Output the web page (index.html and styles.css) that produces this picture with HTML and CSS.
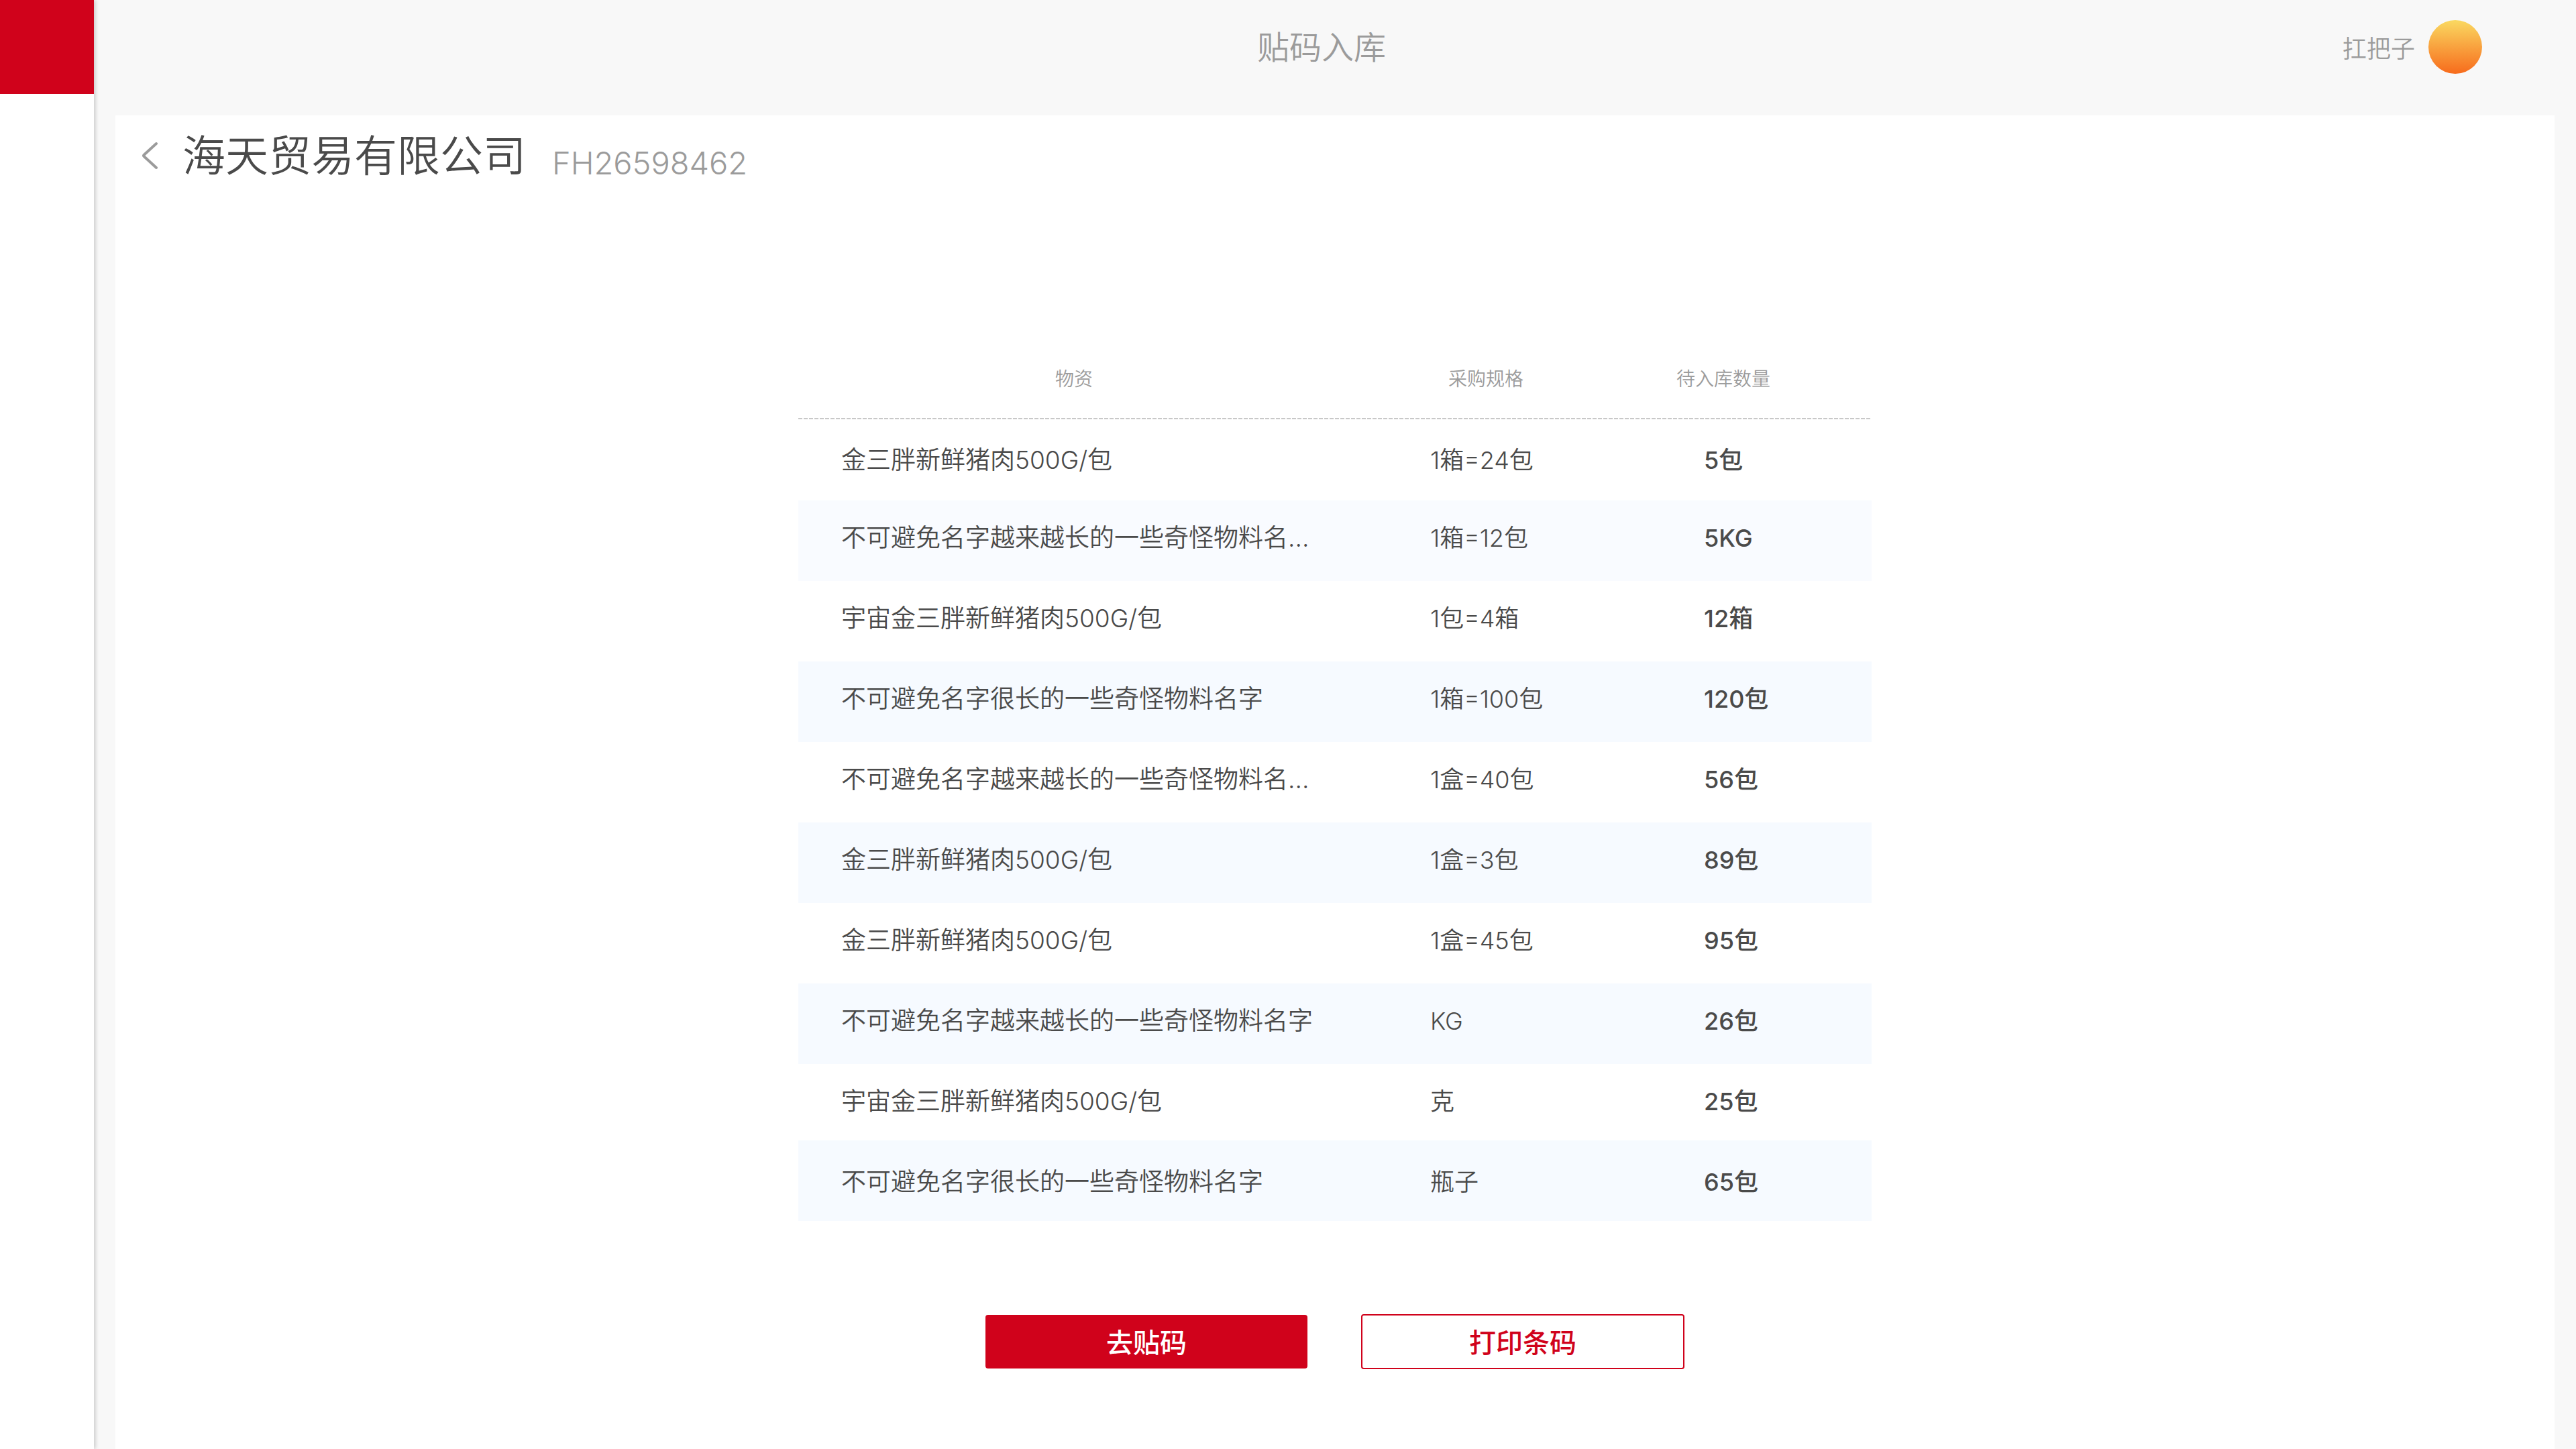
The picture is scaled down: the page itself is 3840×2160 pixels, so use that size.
FILE: index.html
```html
<!DOCTYPE html>
<html lang="zh-CN">
<head>
<meta charset="utf-8">
<meta name="viewport" content="width=device-width, initial-scale=1">
<title>贴码入库</title>
<link rel="stylesheet" href="styles.css">
</head>
<body>
<div class="app">
  <aside class="sidebar">
    <div class="sidebar-logo"></div>
  </aside>
  <div class="content">
    <header class="topbar">
      <h1 class="topbar-title">贴码入库</h1>
      <div class="user">
        <span class="user-name">扛把子</span>
        <span class="avatar"></span>
      </div>
    </header>
    <main class="card">
      <div class="card-head">
        <a class="back" href="#" aria-label="返回">
          <svg class="back-icon" viewBox="0 0 24 42" fill="none" stroke="currentColor" stroke-width="4" stroke-linecap="round" stroke-linejoin="round"><path d="M22 3 3.500 20Q2.400 21 3.500 22L22 39"/></svg>
        </a>
        <h2 class="company">海天贸易有限公司</h2>
        <span class="order-no">FH26598462</span>
      </div>
      <table class="goods">
        <colgroup><col class="col-name"><col class="col-spec"><col class="col-qty"></colgroup>
        <thead>
          <tr><th scope="col">物资</th><th scope="col">采购规格</th><th scope="col" class="th-qty">待入库数量</th></tr>
        </thead>
        <tbody>
          <tr><td>金三胖新鲜猪肉500G/包</td><td>1箱=24包</td><td>5包</td></tr>
          <tr class="row-active"><td>不可避免名字越来越长的一些奇怪物料名...</td><td>1箱=12包</td><td>5KG</td></tr>
          <tr><td>宇宙金三胖新鲜猪肉500G/包</td><td>1包=4箱</td><td>12箱</td></tr>
          <tr><td>不可避免名字很长的一些奇怪物料名字</td><td>1箱=100包</td><td>120包</td></tr>
          <tr><td>不可避免名字越来越长的一些奇怪物料名...</td><td>1盒=40包</td><td>56包</td></tr>
          <tr><td>金三胖新鲜猪肉500G/包</td><td>1盒=3包</td><td>89包</td></tr>
          <tr><td>金三胖新鲜猪肉500G/包</td><td>1盒=45包</td><td>95包</td></tr>
          <tr><td>不可避免名字越来越长的一些奇怪物料名字</td><td>KG</td><td>26包</td></tr>
          <tr><td>宇宙金三胖新鲜猪肉500G/包</td><td>克</td><td>25包</td></tr>
          <tr><td>不可避免名字很长的一些奇怪物料名字</td><td>瓶子</td><td>65包</td></tr>
        </tbody>
      </table>
      <div class="actions">
        <button type="button" class="btn btn-primary">去贴码</button>
        <button type="button" class="btn btn-outline">打印条码</button>
      </div>
    </main>
  </div>
</div>
</body>
</html>
```
FILE: styles.css
```css
:root {
  --red: #d0021b;
  --text: #4a4a4a;
  --muted: #9b9b9b;
  --page: #f8f8f8;
}

* {
  box-sizing: border-box;
}

body {
  margin: 0;
  background: var(--page);
  color: var(--text);
  font-family: Inter, "Noto Sans CJK SC", sans-serif;
  font-size: 36px;
  font-weight: 350;
}

h1,
h2 {
  margin: 0;
  font-weight: 350;
}

.app {
  display: flex;
  min-height: 100vh;
}

.sidebar {
  position: relative;
  flex: 0 0 140px;
  background: #fff;
  box-shadow: 2px 0 6px rgba(0, 0, 0, 0.2);
}

.sidebar-logo {
  height: 140px;
  background: var(--red);
}

.content {
  flex: 1;
  min-width: 0;
  display: flex;
  flex-direction: column;
}

/* Top bar */
.topbar {
  display: grid;
  grid-template-columns: 1fr auto 1fr;
  align-items: center;
  height: 172px;
  padding: 0 140px 32px 100px;
  color: var(--muted);
}

.topbar-title {
  grid-column: 2;
  padding-top: 2px;
  font-size: 48px;
  line-height: 72px;
}

.user {
  display: flex;
  align-items: center;
  justify-content: flex-end;
  gap: 20px;
}

.avatar {
  width: 80px;
  height: 80px;
  border-radius: 50%;
  background: linear-gradient(#fad961, #f76b1c);
}

/* Card */
.card {
  flex: 1;
  margin: 0 32px;
  background: #fff;
}

.card-head {
  display: flex;
  align-items: center;
  height: 120px;
  padding-left: 39px;
}

.back {
  display: flex;
  margin-right: 37px;
  color: var(--muted);
}

.back-icon {
  width: 24px;
  height: 42px;
}

.company {
  font-size: 64px;
  line-height: 96px;
}

.order-no {
  margin-left: 39px;
  padding-top: 22px;
  font-size: 47px;
  line-height: 72px;
  color: var(--muted);
}

/* Goods table */
.goods {
  width: 100%;
  max-width: 1600px;
  margin: 212px auto 0;
  border-collapse: collapse;
  table-layout: fixed;
}

.col-name {
  width: 822px;
}

.col-spec {
  width: 406px;
}

.goods thead {
  background: repeating-linear-gradient(90deg, #c8c8c8 0 6px, transparent 6px 8px) left 0 bottom 1px / 100% 2px no-repeat;
}

.goods th {
  height: 122px;
  padding: 0;
  font-size: 28px;
  line-height: 40px;
  font-weight: 350;
  color: var(--muted);
}

.goods .th-qty {
  padding-right: 70px;
}

.goods td {
  height: 120px;
  padding: 0 0 8px 120px;
  line-height: 56px;
  white-space: nowrap;
}

.goods td:first-child {
  padding-left: 64px;
  font-size: 37px;
}

.goods td:last-child {
  padding-left: 122px;
  font-weight: 500;
}

.goods tbody tr:nth-child(even) {
  background: #f6faff;
}

.goods tbody .row-active:nth-child(even) {
  background: #f9fbff;
}

.goods tbody tr:first-child td {
  padding-bottom: 0;
}

.goods tbody tr:last-child td {
  padding: 4px 0 0 120px;
}

.goods tbody tr:last-child td:first-child {
  padding-left: 64px;
}

.goods tbody tr:last-child td:last-child {
  padding-left: 122px;
}

.goods tbody tr:nth-last-child(2) td {
  height: 114px;
  padding-bottom: 2px;
}

/* Actions */
.actions {
  display: flex;
  justify-content: center;
  align-items: center;
  gap: 80px;
  padding: 139px 0 119px;
}

.btn {
  width: 480px;
  height: 80px;
  padding: 0 0 3px;
  border: 0;
  border-radius: 4px;
  font-family: inherit;
  font-size: 40px;
  font-weight: 500;
  cursor: pointer;
}

.btn-primary {
  background: var(--red);
  color: #fff;
}

.btn-outline {
  width: 482px;
  height: 82px;
  border: 2px solid var(--red);
  background: #fff;
  color: var(--red);
}
```
